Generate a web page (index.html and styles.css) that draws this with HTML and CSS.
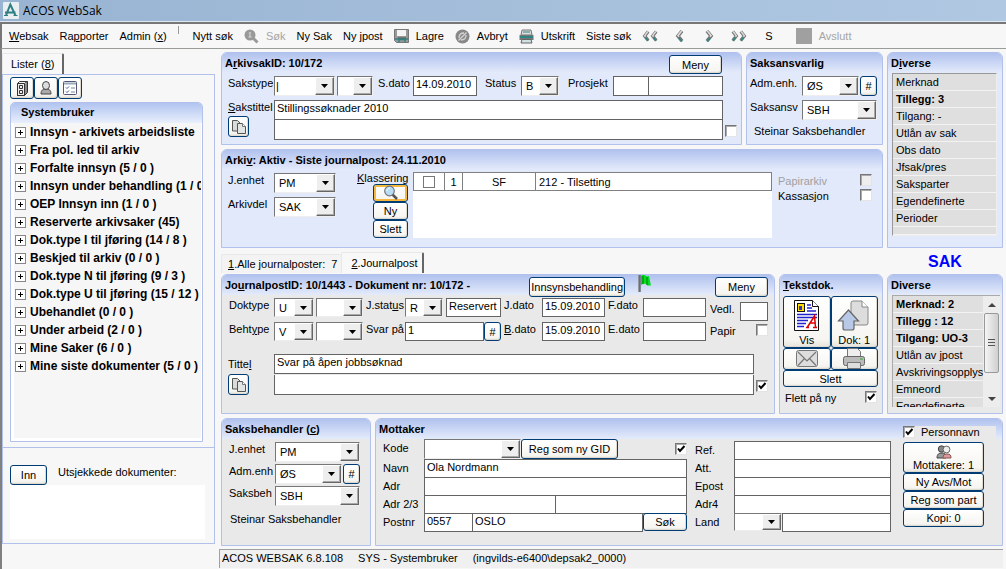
FILE: index.html
```html
<!DOCTYPE html>
<html lang="no">
<head>
<meta charset="utf-8">
<title>ACOS WebSak</title>
<link rel="stylesheet" href="styles.css">
</head>
<body>
<svg class="defs" aria-hidden="true">
  <symbol id="i-copy" viewBox="0 0 16 16"><path d="M1.500 1.500h5l2.500 2.500v8h-7.500z" fill="#d9dada" stroke="#555"/><path d="M6.500 4.500h5l3 3v7h-8z" fill="#e3e4e4" stroke="#555"/><path d="M11.500 4.500v3h3" fill="#fff" stroke="#777"/></symbol>
  <symbol id="i-chev" viewBox="0 0 9 14"><path d="M7 2 3 7l4 5" fill="none" stroke="#777" stroke-width="3.600"/><path d="M6.600 2 3 6.600l1 1.200" fill="none" stroke="#ddd" stroke-width="1.600"/><path d="M4 9l3 3.500" fill="none" stroke="#2a8a88" stroke-width="1.600"/></symbol>
</svg>

<header class="titlebar">
  <svg width="16" height="17" viewBox="0 0 16 17"><rect width="16" height="17" rx="1" fill="#e9eff1"/><path d="M3 13.500 7.300 2.500 12.500 13.500M2 10.500h10.500" fill="none" stroke="#2e7f83" stroke-width="2"/><path d="M1 13.500h4M10.500 13.500h4" stroke="#2e7f83"/></svg>
  <h1>ACOS WebSak</h1>
</header>

<nav class="toolbar">
  <button><u>W</u>ebsak</button>
  <button>Ra<u>p</u>porter</button>
  <button>Admin (<u>x</u>)</button>
  <span class="sep"></span>
  <button>Nytt søk</button>
  <button class="ic" disabled><svg width="15" height="15" viewBox="0 0 15 15"><circle cx="6" cy="6" r="5.500" fill="#999"/><path d="M9 9l4.500 4.500" stroke="#999" stroke-width="3"/><path d="M6 3v5M5 4.500l1-1M4.500 8h3" stroke="#ddd" fill="none"/></svg>Søk</button>
  <button>Ny Sak</button>
  <button>Ny jpost</button>
  <button class="ic"><svg width="15" height="15" viewBox="0 0 15 15"><path d="M.5.5h14v13h-12l-2-2z" fill="#999" stroke="#777"/><path d="M3 1h9v6H3z" fill="#f4f4f4"/><path d="M1 10h13M5 13v-2.500h6V13" stroke="#2d8583" stroke-width="1.500" fill="none"/><path d="M4 9h8" stroke="#555"/></svg>Lagre</button>
  <button class="ic"><svg width="15" height="15" viewBox="0 0 15 15"><circle cx="7.500" cy="7.500" r="7" fill="#888"/><path d="M4 9c0-3 2-5 5-5M6 11c3 0 5-2 5-5M3.500 11.500l8-8" fill="none" stroke="#d5d5d5" stroke-width="1.300"/></svg>Avbryt</button>
  <button class="ic"><svg width="15" height="15" viewBox="0 0 15 15"><path d="M3 1h9l1 5H2z" fill="#ddd" stroke="#777"/><path d="M4 3h7" stroke="#2d8583"/><path d="M.5 6h14v5H.5z" fill="#777"/><path d="M1 8h13" stroke="#2d8583" stroke-width="2"/><path d="M3 10.500h9l1 3.500H2z" fill="#cfe0e0" stroke="#666"/></svg>Utskrift</button>
  <button>Siste søk</button>
  <button class="nav" aria-label="Første"><svg width="8" height="14"><use href="#i-chev"/></svg><svg width="8" height="14"><use href="#i-chev"/></svg></button>
  <button class="nav one" aria-label="Forrige"><svg width="9" height="14"><use href="#i-chev"/></svg></button>
  <button class="nav one flip" aria-label="Neste"><svg width="9" height="14"><use href="#i-chev"/></svg></button>
  <button class="nav flip" aria-label="Siste"><svg width="8" height="14"><use href="#i-chev"/></svg><svg width="8" height="14"><use href="#i-chev"/></svg></button>
  <button class="s">S</button>
  <button class="ic" disabled><svg width="16" height="16"><rect width="16" height="16" fill="#a0a0a0"/></svg>Avslutt</button>
</nav>

<div class="app">
<aside class="side">
  <div class="tabs"><button class="tab on">Lister (<u>8</u>)</button></div>
  <div class="sidebox">
    <div class="tools">
      <button class="btn" aria-label="Arkiv"><svg width="16" height="16" viewBox="0 0 16 16"><path d="M3.500 3.500l2-2h8v11l-3 3h-7z" fill="#eee" stroke="#333"/><path d="M10.500 3.500h-7v12h7zl3-2M5.500 5.500h3v3h-3zM5.500 10.500h3v3h-3z" fill="none" stroke="#333"/><path d="M11.500 4v10M12.500 3v10" stroke="#888"/></svg></button>
      <button class="btn" aria-label="Bruker"><svg width="16" height="16" viewBox="0 0 16 16"><path d="M3 14c0-4 2-5 5-5s5 1 5 5z" fill="#aaa" stroke="#444"/><ellipse cx="8" cy="5.500" rx="3.500" ry="4" fill="#ddd" stroke="#444"/></svg></button>
      <button class="btn" aria-label="Oppgaver"><svg width="16" height="16" viewBox="0 0 16 16"><rect x="1.500" y="1.500" width="13" height="13" rx="1" fill="#fff" stroke="#557"/><path d="M2 3.500h12" stroke="#9ab" stroke-width="2"/><path d="M4 7.500l1 1 2-2M4 11.500l1 1 2-2" fill="none" stroke="#235a9c"/><path d="M9 8h4M9 12h4" stroke="#789"/></svg></button>
    </div>
    <section class="treebox">
      <h2>Systembruker</h2>
      <ul class="tree">
        <li>Innsyn - arkivets arbeidsliste</li>
        <li>Fra pol. led til arkiv</li>
        <li>Forfalte innsyn (5 / 0 )</li>
        <li>Innsyn under behandling (1 / 0 )</li>
        <li>OEP Innsyn inn (1 / 0 )</li>
        <li>Reserverte arkivsaker (45)</li>
        <li>Dok.type I til jføring (14 / 8 )</li>
        <li>Beskjed til arkiv (0 / 0 )</li>
        <li>Dok.type N til jføring (9 / 3 )</li>
        <li>Dok.type U til jføring (15 / 12 )</li>
        <li>Ubehandlet (0 / 0 )</li>
        <li>Under arbeid (2 / 0 )</li>
        <li>Mine Saker (6 / 0 )</li>
        <li>Mine siste dokumenter (5 / 0 )</li>
      </ul>
    </section>
  </div>
  <div class="sidebox out">
    <div class="outhead"><button class="btn">Inn</button><span>Utsjekkede dokumenter:</span></div>
    <div class="outlist"></div>
  </div>
</aside>

<main class="main">
  <div class="upper">
    <div class="top">
      <section class="panel blue sak">
        <header><h2>A<u>r</u>kivsakID: 10/172</h2><button class="btn meny">Meny</button></header>
        <div class="body">
          <div class="sakrow">
            <label for="stype">Sakstype</label>
            <span class="sel"><select id="stype"><option>|</option></select></span>
            <span class="sel"><select aria-label="Undertype"><option></option></select></span>
            <label for="sdato">S.dato</label><input id="sdato" value="14.09.2010">
            <label for="status">Status</label><span class="sel"><select id="status"><option>B</option></select></span>
            <label for="pro">Prosjekt</label>
            <span class="pair"><input id="pro"><input aria-label="Prosjektnavn"></span>
          </div>
          <div class="title">
            <div class="tl"><label for="stittel"><u>S</u>akstittel</label><button class="btn sq" aria-label="Kopier"><svg width="16" height="16"><use href="#i-copy"/></svg></button></div>
            <div class="stack"><input id="stittel" value="Stillingssøknader 2010"><input aria-label="Tittel linje 2"></div>
            <input type="checkbox" aria-label="Skjermet tittel">
          </div>
        </div>
      </section>
      <section class="panel blue ansv">
        <header><h2>Saksansvarli<u>g</u></h2></header>
        <div class="body">
          <div class="arow"><label for="adm">Adm.enh.</label><span class="sel"><select id="adm"><option>ØS</option></select></span><button class="btn hash">#</button></div>
          <div class="arow two"><label for="sansv">Saksansv</label><span class="sel"><select id="sansv"><option>SBH</option></select></span></div>
          <p>Steinar Saksbehandler</p>
        </div>
      </section>
    </div>
    <section class="panel blue arkiv">
      <header><h2>Arki<u>v</u>: Aktiv - Siste journalpost: 24.11.2010</h2></header>
      <div class="body">
        <div class="acol">
          <label for="jenh">J.enhet</label><span class="sel"><select id="jenh"><option>PM</option></select></span>
          <label for="adel">Arkivdel</label><span class="sel"><select id="adel"><option>SAK</option></select></span>
        </div>
        <div class="klass"><span><u>K</u>lassering</span>
          <button class="btn hot" aria-label="Søk klassering"><svg width="16" height="16" viewBox="0 0 16 16"><path d="M9 9l5 5" stroke="#555" stroke-width="2.500"/><circle cx="6.500" cy="6" r="4.800" fill="#b9dcf7" stroke="#777" stroke-width="1.200"/><path d="M4 6c0-2 1-3 3-3" stroke="#fff" fill="none"/></svg></button>
          <button class="btn">Ny</button><button class="btn">Slett</button></div>
        <div class="tablebox"><table><tr><td class="c1"><input type="checkbox" class="flat" aria-label="Velg"></td><td class="c2">1</td><td class="c3">SF</td><td>212 - Tilsetting</td></tr></table></div>
        <div class="checks">
          <label for="pa" class="off">Papirarkiv</label><input type="checkbox" id="pa" disabled>
          <label for="ka">Kassasjon</label><input type="checkbox" id="ka">
        </div>
      </div>
    </section>
    <section class="panel blue div1">
      <header><h2>D<u>i</u>verse</h2></header>
      <ul class="list">
        <li>Merknad</li><li class="b">Tillegg: 3</li><li>Tilgang: -</li><li>Utlån av sak</li><li>Obs dato</li><li>Jfsak/pres</li><li>Saksparter</li><li>Egendefinerte</li><li>Perioder</li><li class="end"></li>
      </ul>
    </section>
  </div>

  <div class="mid">
    <div class="tabs"><button class="tab"><u>1</u>.Alle journalposter:&nbsp; 7</button><button class="tab on"><u>2</u>.Journalpost</button></div>
    <strong class="sakmark">SAK</strong>
  </div>

  <div class="lower">
    <section class="panel jp">
      <header><h2>Jo<u>u</u>rnalpostID: 10/1443 - Dokument nr: 10/172 -</h2>
        <button class="btn inns">Innsynsbehandling</button>
        <svg class="flag" width="14" height="18" viewBox="0 0 14 18"><path d="M1.500 0v17" stroke="#333" stroke-width="2"/><path d="M1 0v17" stroke="#aaa"/><path d="M3 1c2-2 4-1 5 0s2 0 3 0l2 10c-1-2-3 1-4-1S5 9 3 10z" fill="#0d2"/><path d="M5 1v8M9 2v8" stroke="#070"/></svg>
        <button class="btn meny">Meny</button></header>
      <div class="body">
        <div class="jtop">
          <div class="jgrid">
            <label for="dt">Doktype</label><span class="sel"><select id="dt"><option>U</option></select></span><span class="sel"><select aria-label="Dokumenttype 2"><option></option></select></span>
            <label for="js">J.stat<u>u</u>s</label><span class="jcell"><span class="sel"><select id="js"><option>R</option></select></span><input aria-label="Statustekst" class="tight" value="Reservert"></span>
            <label for="jd">J.dato</label><input id="jd" value="15.09.2010"><label for="fd">F.dato</label><input id="fd">
            <label for="bt">Beht<u>y</u>pe</label><span class="sel"><select id="bt"><option>V</option></select></span><span class="sel"><select aria-label="Behandlingstype 2"><option></option></select></span>
            <label for="sp">Svar på</label><span class="jcell n"><input id="sp" value="1"><button class="btn hash">#</button></span>
            <label for="bd"><u>B</u>.dato</label><input id="bd" value="15.09.2010"><label for="ed">E.dato</label><input id="ed">
          </div>
          <div class="vedl"><label for="ve">Vedl.</label><input id="ve"><label for="pp">Papir</label><input type="checkbox" id="pp"></div>
        </div>
        <div class="title">
          <div class="tl"><label for="jt">Titte<u>l</u></label><button class="btn sq" aria-label="Kopier"><svg width="16" height="16"><use href="#i-copy"/></svg></button></div>
          <div class="stack"><input id="jt" value="Svar på åpen jobbsøknad"><input aria-label="Tittel linje 2"></div>
          <input type="checkbox" checked aria-label="Skjermet tittel">
        </div>
      </div>
    </section>
    <section class="panel tekst">
      <header><h2><u>T</u>ekstdok.</h2></header>
      <div class="docs">
        <button class="btn big"><svg width="28" height="34" viewBox="0 0 28 34"><path d="M1.500 1.500h18l6 6v24h-24z" fill="#fff" stroke="#111"/><path d="M19.500 1.500v6h6" fill="#fff" stroke="#111"/><rect x="4.500" y="4.500" width="7" height="8" fill="#fd0" stroke="#111"/><path d="M6 7h3v4H6z" fill="#33c"/><path d="M14 6h4M14 9h5M14 12h9M4 15.500h20M4 18.500h20M4 21.500h11M4 24.500h9M4 27.500h7" stroke="#22c" stroke-width="1.400"/><path d="M13 28.500h3M20 28.500h4M14.500 28l7-11 1 11M17 24h5" fill="none" stroke="#d00" stroke-width="1.500"/></svg>Vis</button>
        <button class="btn big"><svg width="34" height="34" viewBox="0 0 34 34"><path d="M14 4q0-2 2-2h9l6 6v16q0 2-2 2H16q-2 0-2-2z" fill="#ddd" stroke="#888"/><path d="M25 2v6h6" fill="#fff" stroke="#888"/><path d="M11.500 11 1.500 22H6v7q0 2 2 2h7q2 0 2-2v-7h4.500z" fill="#b7c9e6" stroke="#666" stroke-width="1.200"/></svg>Dok: 1</button>
        <button class="btn" aria-label="E-post"><svg width="24" height="20" viewBox="0 0 24 20"><rect x="1.500" y="1.500" width="21" height="16" rx="2" fill="#ddd" stroke="#777"/><path d="M3 3l9 9 9-9M3 16.500l6.500-7M21 16.500l-6.500-7" fill="none" stroke="#777" stroke-width="1.200"/></svg></button>
        <button class="btn" aria-label="Skriv ut"><svg width="24" height="22" viewBox="0 0 24 22"><path d="M5.500 9V.5h10l3 3V9" fill="#eee" stroke="#777"/><rect x="1.500" y="8.500" width="21" height="9" rx="2" fill="#bbb" stroke="#666"/><path d="M5.500 14.500h13v6h-13z" fill="#ddd" stroke="#777"/><path d="M18 11h3" stroke="#3a3"/></svg></button>
        <button class="btn wide">Slett</button>
      </div>
      <div class="flett"><label for="fl">Flett på ny</label><input type="checkbox" id="fl" checked></div>
    </section>
    <section class="panel div2">
      <header><h2>Diverse</h2></header>
      <div class="scroll">
        <ul class="list">
          <li class="b">Merknad: 2</li><li class="b">Tillegg : 12</li><li class="b">Tilgang: UO-3</li><li>Utlån av jpost</li><li>Avskrivingsopplysn</li><li>Emneord</li><li>Egendefinerte</li>
        </ul>
        <div class="bar"><i class="up"></i><span class="thumb"><i></i></span><i class="down"></i></div>
      </div>
    </section>
  </div>

  <div class="bottom">
    <section class="panel beh">
      <header><h2>Saksbehandler (<u>c</u>)</h2></header>
      <div class="body">
        <div class="arow two"><label for="b1">J.enhet</label><span class="sel"><select id="b1"><option>PM</option></select></span></div>
        <div class="arow"><label for="b2">Adm.enh</label><span class="sel"><select id="b2"><option>ØS</option></select></span><button class="btn hash">#</button></div>
        <div class="arow two"><label for="b3">Saksbeh</label><span class="sel"><select id="b3"><option>SBH</option></select></span></div>
        <p>Steinar Saksbehandler</p>
      </div>
    </section>
    <section class="panel mott">
      <header><h2>Mottaker</h2></header>
      <div class="body">
        <div class="addr">
          <label for="kode">Kode</label><div class="kode"><span class="sel"><select id="kode"><option></option></select></span><button class="btn">Reg som ny GID</button><input type="checkbox" checked aria-label="Ekstern"></div>
          <label for="navn">Navn</label><input id="navn" value="Ola Nordmann">
          <label for="adr">Adr</label><input id="adr">
          <label for="adr2">Adr 2/3</label><div class="half"><input id="adr2"><input aria-label="Adr 3"></div>
          <label for="post">Postnr</label><div class="post"><input id="post" value="0557"><input aria-label="Poststed" value="OSLO"><button class="btn">Søk</button></div>
        </div>
        <div class="addr r">
          <label for="ref">Ref.</label><input id="ref">
          <label for="att">Att.</label><input id="att">
          <label for="ep">Epost</label><input id="ep">
          <label for="a4">Adr4</label><input id="a4">
          <label for="land">Land</label><div class="land"><span class="sel"><select id="land"><option></option></select></span><input aria-label="Landnavn"></div>
        </div>
        <div class="person">
          <label class="pn"><input type="checkbox" checked>Personnavn</label>
          <button class="btn mt"><svg width="16" height="14" viewBox="0 0 16 14"><path d="M1 13c0-4 2-5 5-5s4 1 4 5z" fill="#999" stroke="#444"/><circle cx="5.500" cy="4" r="3.200" fill="#888" stroke="#444"/><path d="M7 13c0-3 1-4 4-4s4 1 4 4z" fill="#d99" stroke="#855"/><circle cx="10.500" cy="4.500" r="3.400" fill="#eee" stroke="#666"/></svg>Mottakere: 1</button>
          <button class="btn">Ny Avs/Mot</button><button class="btn">Reg som part</button><button class="btn">Kopi: 0</button>
        </div>
      </div>
    </section>
  </div>
  <footer class="statusbar"><span>ACOS WEBSAK 6.8.108</span><span>SYS - Systembruker</span><span>(ingvilds-e6400\depsak2_0000)</span></footer>
</main>
</div>
</body>
</html>
```

FILE: styles.css
```css
* { box-sizing: border-box; }
body {
  margin: 0; min-height: 100vh; display: flex; flex-direction: column;
  background: #f7f7f7; color: #000;
  font: 11px/14px "Liberation Sans", Arial, sans-serif;
}
h1, h2, p, ul { margin: 0; padding: 0; list-style: none; }
h2 { font-size: 11px; line-height: 16px; font-weight: bold; white-space: nowrap; }
.defs { width: 0; height: 0; position: absolute; }
button, input, select { font: inherit; color: inherit; margin: 0; }
label { white-space: nowrap; }

.titlebar {
  display: flex; align-items: center; gap: 4px; height: 22px; padding: 0 3px;
  background: linear-gradient(90deg, #98b4d2, #b0c8e2); border-bottom: 1px solid #dfe8f2;
}
.titlebar h1 { font: 12px/18px "Open Sans", "Noto Sans", sans-serif; }

.toolbar {
  display: flex; align-items: center; gap: 11px; height: 27px; padding: 0 7px;
  border-top: 2px solid #777; border-bottom: 1px solid #999c97; border-left: 2px solid #777;
}
.toolbar button { padding: 0; border: 0; background: none; white-space: nowrap; }
.toolbar .ic { display: flex; align-items: center; gap: 7px; }
.toolbar button:disabled { color: #a5a5a5; }
.sep { align-self: flex-start; width: 1px; height: 8px; margin: 2px 3px 0 0; background: #999; }
.toolbar .nav { display: flex; width: 16px; justify-content: center; }
.toolbar .one { width: 20px; }
.toolbar .flip { transform: scaleX(-1); }
.toolbar .s { margin: 0 12px 0 7px; }

.app { flex: 1; display: flex; border-left: 2px solid #808080; }
.side { width: 213px; flex: none; padding-top: 4px; }
.tabs { display: flex; align-items: flex-end; }
.tab {
  height: 19px; padding: 0 8px; border: 1px solid #e8e8e8; border-width: 1px 0 0 1px;
  border-radius: 2px 2px 0 0; background: #f3f3f3; white-space: pre;
}
.tab.on { height: 21px; background: #f8f8f8; border-right: 2px solid #666; }
.sidebox { border: 1px solid #b1c1ec; padding: 2px 11px 5px 7px; }
.tools { display: flex; height: 22px; }
.tools .btn { width: 24px; height: 22px; }
.treebox { margin-top: 3px; height: 340px; border: 1px solid #b1c1ec; border-radius: 5px 5px 0 0; display: flex; flex-direction: column; background: #fff; }
.treebox h2 { height: 20px; line-height: 19px; padding-left: 10px; border-radius: 4px 4px 0 0; background: linear-gradient(#b1c4f0, #e9effc); }
.tree { flex: 1; margin: 0 0 3px 3px; border-right: 1px solid #fff; background: #f6f6f6; overflow: hidden; font: bold 12px/18px "Liberation Sans", Arial, sans-serif; }
.tree li { display: flex; align-items: center; gap: 4px; padding-left: 1px; white-space: nowrap; }
.tree li::before {
  content: ""; flex: none; width: 9px; height: 9px; border: 1px solid #888;
  background: linear-gradient(#000, #000) 50% 50% / 5px 1px no-repeat, linear-gradient(#000, #000) 50% 50% / 1px 5px no-repeat, #fff;
}
.out { border-top: 0; padding: 17px 7px 4px; }
.outhead { display: flex; gap: 11px; }
.outhead .btn { width: 37px; height: 20px; }
.outlist { height: 54px; margin-right: 2px; background: #fff; }

.btn {
  display: flex; align-items: center; justify-content: center; padding: 0;
  border: 1px solid #003c74; border-radius: 3px; color: #000; white-space: nowrap;
  background: linear-gradient(#fff, #f6f5f1 85%, #e6e3da);
  box-shadow: inset -1px -1px 0 #dedacf;
}
.sq { width: 21px; height: 21px; }
.hash { width: 17px; }
.meny { width: 53px; height: 19px; margin-left: auto; }
.hot { box-shadow: inset 0 0 0 2px #f5b73c; }

input:not([type]) {
  min-width: 0; width: 100%; height: 20px; padding: 0 2px 4px; border: 1px solid #646464; border-radius: 0; background: #fff;
}
input[type=checkbox] {
  appearance: none; flex: none; width: 12px; height: 12px; background: #fff;
  border: 1px solid; border-color: #777 #e4e4e4 #e4e4e4 #777;
  box-shadow: inset 1px 1px 0 #aaa;
}
input[type=checkbox]:checked {
  background: #fff url("data:image/svg+xml,%3Csvg xmlns='http://www.w3.org/2000/svg' width='10' height='10'%3E%3Cpath d='M2 4.500l2 2.500 4.500-5' fill='none' stroke='black' stroke-width='2'/%3E%3C/svg%3E") center no-repeat;
}
input[type=checkbox]:disabled { background: #eee; }
input[type=checkbox].flat { border-color: #777; box-shadow: none; display: block; margin: auto; }

.sel { display: grid; min-width: 0; height: 20px; border: 1px solid; border-color: #777 #eee #eee #777; background: #fff; }
.sel select { grid-area: 1 / 1; appearance: none; min-width: 0; width: 100%; height: 100%; border: 0; border-radius: 0; padding: 0 17px 0 4px; background: #fff; }
.sel::after {
  content: ""; grid-area: 1 / 1; justify-self: end; width: 17px; pointer-events: none;
  border: 1px solid; border-color: #fff #666 #666 #fff; box-shadow: inset -1px -1px 0 #aaa;
  background: #eee url("data:image/svg+xml,%3Csvg xmlns='http://www.w3.org/2000/svg' width='7' height='4'%3E%3Cpath d='M0 0h7L3.500 4z'/%3E%3C/svg%3E") center no-repeat;
}

.main { flex: 1; min-width: 0; padding: 3px 3px 0 6px; }
.panel { border: 1px solid #b1c1ec; border-radius: 6px 6px 0 0; background: #e9e9e9; min-width: 0; }
.panel.blue { background: #e2e9fa; }
.panel > header {
  display: flex; height: 20px; padding: 2px 6px 0 3px; border-radius: 5px 5px 0 0;
  background: linear-gradient(#b1c2ee, #e4ebfb);
}
.body label { line-height: 15px; }
.upper { display: grid; grid-template-columns: minmax(0, 1fr) 116px; gap: 4px; }
.top { display: flex; gap: 4px; }
.sak { flex: 1; }
.sak > header { padding-right: 19px; }
.sak .body { padding: 3px 18px 4px 6px; }
.sakrow { display: grid; grid-template-columns: 44px 61px 36px 36px 64px 40px 38px 50px minmax(0, 1fr); gap: 2px; }
.sakrow label:nth-of-type(2) { padding-left: 3px; }
.sakrow label:nth-of-type(3) { padding-left: 6px; }
.sakrow label:nth-of-type(4) { padding-left: 7px; }
.sakrow .sel:nth-of-type(1) select { padding-left: 1px; }
.pair { display: grid; grid-template-columns: 36px minmax(0, 1fr); }
.pair input + input { border-left: 0; }
.title { display: flex; margin: 4px -16px 0 0; }
.title .tl { width: 46px; flex: none; display: flex; flex-direction: column; }
.title .tl .btn { margin-top: 1px; }
.stack { flex: 1; display: grid; }
.stack input + input { border-top: 0; }
.title > input { align-self: flex-end; margin: 0 2px 3px; }
.ansv { width: 137px; }
.ansv .body { padding: 3px 5px 4px 3px; }
.ansv p { margin: 3px 0 0 4px; }
.arow { display: grid; grid-template-columns: 52px minmax(0, 1fr) 17px; column-gap: 1px; margin-bottom: 4px; }
.arow.two { grid-template-columns: 52px minmax(0, 1fr); }
.arow .sel { margin-left: -1px; }

.arkiv > .body { display: flex; padding: 2px 10px 9px 6px; }
.acol { display: grid; grid-template-columns: 46px 62px; grid-auto-rows: 20px; row-gap: 4px; padding-top: 1px; }
.klass { width: 51px; margin-left: 21px; display: flex; flex-direction: column; align-items: flex-end; }
.klass span { align-self: flex-start; line-height: 12px; }
.klass .btn { width: 35px; height: 18px; }
.tablebox { flex: 1; height: 66px; margin-left: 5px; background: #fff; }
.tablebox table { width: 100%; border-collapse: collapse; }
.tablebox td { height: 18px; padding: 0 3px; border: 1px solid #808080; }
.tablebox .c1 { width: 31px; }
.tablebox .c2 { width: 18px; text-align: center; }
.tablebox .c3 { width: 73px; text-align: center; }
.checks { width: 100px; padding: 2px 0 0 6px; display: grid; grid-template-columns: 1fr 12px; grid-auto-rows: 15px; align-content: start; }
.off { color: #a0a0a0; }

.div1 { grid-column: 2; grid-row: 1 / 3; }
.list { background: #dfdfdf; overflow: hidden; }
.list li { height: 17px; padding-left: 3px; line-height: 16px; border-bottom: 1px solid #f3f3f3; white-space: nowrap; }
.b { font-weight: bold; }
.div1 .list { margin: 0 5px 0 4px; border: 1px solid; border-color: #999 #eee #eee #999; }
.list .end { height: 8px; }

.mid { display: flex; align-items: flex-end; height: 26px; }
.mid .tabs { flex: 1; margin-bottom: 1px; }
.mid .tab { padding: 0 4px 0 6px; }
.mid .tab.on { padding-left: 9px; }
.sakmark { width: 116px; text-align: center; font-size: 16px; line-height: 22px; color: #00f; margin-bottom: 1px; }

.lower { display: grid; grid-template-columns: minmax(0, 1fr) 104px 116px; gap: 4px; }
.jp .body { padding: 3px 6px 18px; }
.jp > header .btn { height: 20px; }
.inns { width: 96px; margin-left: 59px; }
.flag { margin: -2px 0 0 13px; }
.jtop { display: flex; gap: 2px; }
.jgrid { flex: 1; display: grid; grid-template-columns: 44px 40px 47px 38px minmax(95px, 1fr) 37px 63px 34px 63px; gap: 5px 2px; grid-auto-rows: 19px; }
.jgrid label:nth-of-type(n) { padding-left: 1px; }
.jgrid .sel, .jgrid input:not([type]), .vedl input:not([type]) { height: 19px; }
.jcell { display: grid; grid-template-columns: 38px minmax(0, 1fr); gap: 3px; }
.jcell.n { grid-template-columns: minmax(0, 1fr) 17px; gap: 0; }
.jgrid input.tight { padding-right: 0; }
.vedl { display: grid; grid-template-columns: 30px 28px; column-gap: 2px; row-gap: 3px; padding-top: 4px; align-content: start; }
.vedl label { padding-left: 2px; }
.vedl input[type=checkbox] { justify-self: end; }
.jp .title { margin: 13px -2px 0 0; }
.jp .tl { padding-top: 3px; }
.jp .tl .btn { margin-top: 2px; }

.docs { display: grid; grid-template-columns: 1fr 1fr; grid-template-rows: 52px 22px 17px; margin: 1px 4px 0 3px; }
.big { flex-direction: column; justify-content: flex-end; }
.wide { grid-column: 1 / 3; }
.flett { display: flex; justify-content: space-between; padding: 4px 5px 0; }
.scroll { display: flex; height: 112px; margin: 0 2px 0 4px; border: 1px solid #aaa; border-width: 1px 0 0 1px; }
.scroll .list { flex: 1; min-width: 0; }
.bar { width: 17px; display: flex; flex-direction: column; align-items: center; background: #ededed; }
.bar > i { height: 17px; display: grid; place-items: center; }
.bar > i::before { content: ""; border: 4px solid transparent; border-top: 0; border-bottom-color: #444; }
.bar > .down { margin-top: auto; }
.bar > .down::before { border-top: 4px solid #444; border-bottom: 0; }
.thumb { width: 15px; height: 60px; display: grid; place-items: center; border: 1px solid #999; border-radius: 2px; background: linear-gradient(90deg, #f5f5f5, #cfcfcf); }
.thumb i { width: 7px; height: 8px; background: repeating-linear-gradient(#555 0 1px, transparent 1px 3px); }

.bottom { display: flex; gap: 4px; margin-top: 4px; }
.beh { width: 150px; }
.beh .body { padding: 3px 10px 4px 7px; }
.beh .arow { grid-template-columns: 46px minmax(0, 1fr) 17px; margin-bottom: 2px; }
.beh .arow.two { grid-template-columns: 46px minmax(0, 1fr); }
.beh p { margin: 6px 0 0 1px; }
.mott { flex: 1; }
.mott .body { display: flex; padding: 0 18px 14px 7px; }
.addr { flex: 1; display: grid; grid-template-columns: 41px minmax(0, 1fr); grid-template-rows: 20px; grid-auto-rows: 18px; }
.addr label { line-height: 18px; }
.addr input:not([type]) { height: 19px; }
.addr.r { flex: 0 0 196px; margin: 2px 12px 0 8px; grid-template-columns: 39px minmax(0, 1fr); grid-template-rows: 18px; }
.kode { display: flex; align-items: center; }
.kode .sel { width: 97px; }
.kode .btn { width: 97px; height: 20px; }
.kode input { margin-left: auto; }
.half { display: grid; grid-template-columns: 1fr 1fr; }
.half input + input, .post input + input { border-left: 0; }
.post { display: grid; grid-template-columns: 49px minmax(0, 1fr) 44px; }
.post .btn { height: 18px; }
.land { display: grid; grid-template-columns: 48px minmax(0, 1fr); }
.land .sel { height: 18px; }
.person { width: 81px; display: flex; flex-direction: column; margin-top: -13px; }
.person .btn { height: 18px; }
.person .mt { height: 31px; flex-direction: column; justify-content: flex-end; line-height: 13px; }
.person .pn { display: flex; gap: 6px; height: 16px; line-height: 13px; margin-right: -12px; background: #e9e9e9; }
.statusbar { display: flex; gap: 15px; height: 19px; margin: 3px 0 0 -2px; padding: 1px 2px; border: 1px solid #a0a0a0; border-width: 1px 0 0 1px; background: #f0f0f0; }
```
